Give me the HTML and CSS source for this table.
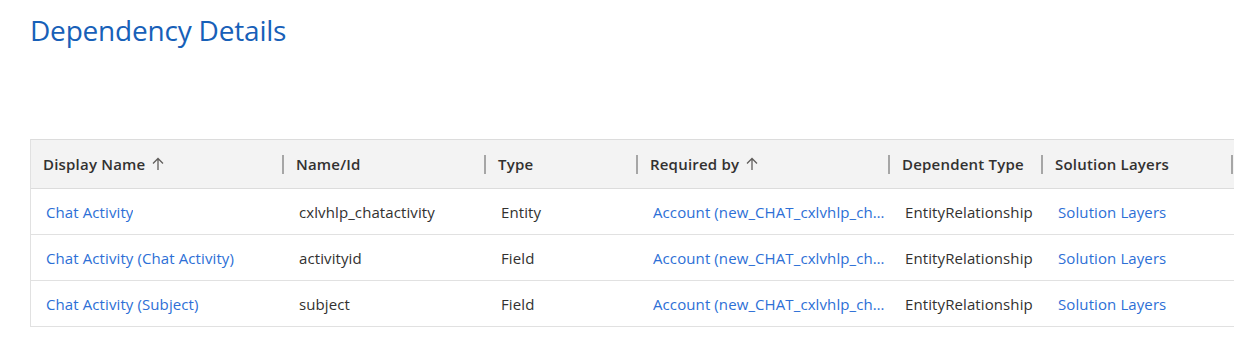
FILE: index.html
```html
<!DOCTYPE html>
<html lang="en">

<head>
    <meta charset="utf-8">
    <title>Dependency Details</title>
    <link rel="stylesheet" href="styles.css">
</head>

<body>
    <h1>Dependency Details</h1>

    <section class="grid">
        <div class="rad hoved">
            <div class="celle">Display Name <svg class="pil" viewBox="0 0 12 14"><path d="M6 13V1.5M1 6.5L6 1.5L11 6.5" /></svg><span class="skille"></span></div>
            <div class="celle">Name/Id<span class="skille"></span></div>
            <div class="celle">Type<span class="skille"></span></div>
            <div class="celle">Required by <svg class="pil" viewBox="0 0 12 14"><path d="M6 13V1.5M1 6.5L6 1.5L11 6.5" /></svg><span class="skille"></span></div>
            <div class="celle">Dependent Type<span class="skille"></span></div>
            <div class="celle">Solution Layers<span class="skille"></span></div>
        </div>

        <div class="rad">
            <div class="celle"><a href="#">Chat Activity</a></div>
            <div class="celle">cxlvhlp_chatactivity</div>
            <div class="celle">Entity</div>
            <div class="celle"><a href="#">Account (new_CHAT_cxlvhlp_ch…</a></div>
            <div class="celle">EntityRelationship</div>
            <div class="celle"><a href="#">Solution Layers</a></div>
        </div>

        <div class="rad">
            <div class="celle"><a href="#">Chat Activity (Chat Activity)</a></div>
            <div class="celle">activityid</div>
            <div class="celle">Field</div>
            <div class="celle"><a href="#">Account (new_CHAT_cxlvhlp_ch…</a></div>
            <div class="celle">EntityRelationship</div>
            <div class="celle"><a href="#">Solution Layers</a></div>
        </div>

        <div class="rad">
            <div class="celle"><a href="#">Chat Activity (Subject)</a></div>
            <div class="celle">subject</div>
            <div class="celle">Field</div>
            <div class="celle"><a href="#">Account (new_CHAT_cxlvhlp_ch…</a></div>
            <div class="celle">EntityRelationship</div>
            <div class="celle"><a href="#">Solution Layers</a></div>
        </div>
    </section>
</body>

</html>
```

FILE: styles.css
```css
body {
    margin: 0;
    padding-left: 30px;
    font-family: 'Open Sans', 'Liberation Sans', sans-serif;
    background-color: #ffffff;
    color: #323130;
    overflow: hidden;
    height: 359px;
}

h1 {
    margin: 0;
    padding-top: 11px;
    height: 128px;
    font-size: 28px;
    font-weight: 400;
    line-height: 38px;
    color: #1760b8;
    letter-spacing: -0.2px;
}

.grid {
    width: 1230px;
    border-left: 1px solid #e1e1e1;
    border-top: 1px solid #dcdcdc;
}

.rad {
    display: grid;
    grid-template-columns: 253px 202px 152px 252px 153px 190px 28px;
    height: 45px;
    border-bottom: 1px solid #e1e1e1;
    font-size: 15px;
    letter-spacing: 0.1px;
}

.hoved {
    height: 48px;
    background-color: #f3f3f3;
    border-bottom: 1px solid #dcdcdc;
    font-weight: 600;
    letter-spacing: 0.2px;
}

.celle {
    position: relative;
    display: flex;
    align-items: center;
    padding: 0 2px 0 15px;
    white-space: nowrap;
    overflow: hidden;
}

.celle a {
    color: #2d6fd6;
    text-decoration: none;
    overflow: hidden;
    text-overflow: ellipsis;
}

.hoved .celle {
    padding-left: 12px;
    overflow: visible;
}

.pil {
    width: 12px;
    height: 14px;
    margin-left: 7px;
    fill: none;
    stroke: #605e5c;
    stroke-width: 1.3;
}

.skille {
    position: absolute;
    right: 0;
    top: 15px;
    width: 2px;
    height: 19px;
    background-color: #a6a6a6;
}
```
